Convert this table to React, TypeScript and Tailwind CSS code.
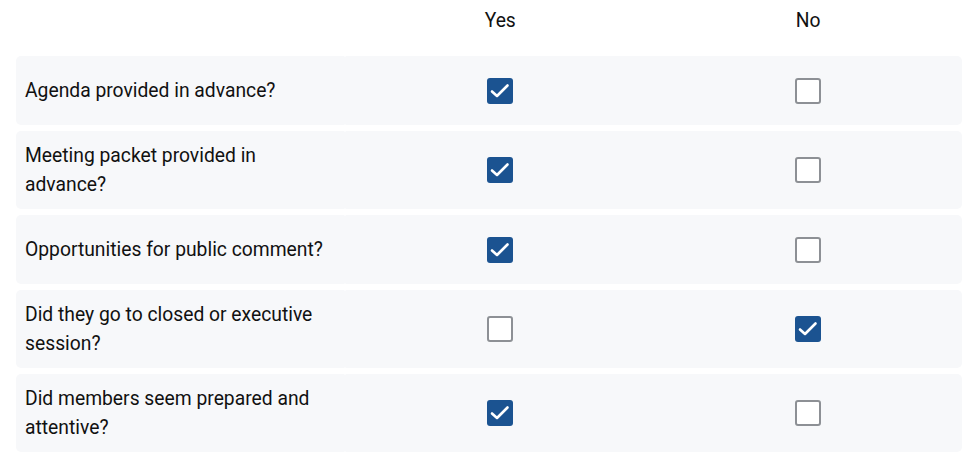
import React from "react";

type Row = { label: string; yes: boolean };

const rows: Row[] = [
  { label: "Agenda provided in advance?", yes: true },
  { label: "Meeting packet provided in advance?", yes: true },
  { label: "Opportunities for public comment?", yes: true },
  { label: "Did they go to closed or executive session?", yes: false },
  { label: "Did members seem prepared and attentive?", yes: true },
];

function Box({ checked }: { checked: boolean }) {
  if (checked) {
    return (
      <div className="w-[26px] h-[26px] rounded-[3px] bg-[#1b5391] flex items-center justify-center">
        <svg width="26" height="26" viewBox="0 0 26 26">
          <polyline
            points="5,13.5 10,18 20.5,7.5"
            fill="none"
            stroke="#ffffff"
            strokeWidth="2.6"
            strokeLinecap="round"
            strokeLinejoin="round"
          />
        </svg>
      </div>
    );
  }
  return <div className="w-[26px] h-[26px] rounded-[3px] border-2 border-[#8d9095] bg-white" />;
}

export default function App() {
  return (
    <div
      className="w-[980px] h-[460px] bg-white text-[#111111]"
      style={{ fontFamily: "Roboto, 'Liberation Sans', sans-serif" }}
    >
      <div className="ml-4 w-[946px]">
        <div className="grid grid-cols-[329px_1fr_1fr] h-[42px] items-center text-[19.3px]">
          <div />
          <div className="text-center pl-[2px]">Yes</div>
          <div className="text-center pl-[1px]">No</div>
        </div>
        <div className="mt-[14px] flex flex-col gap-[6px]">
          {rows.map((r, i) => (
            <div key={i} className="grid grid-cols-[329px_1fr_1fr] min-h-[69px]">
              <div className="bg-[#f7f8fa] rounded-l-[5px] rounded-r-[1.5px] flex items-center pl-[9px] py-[10px] text-[19.3px] leading-[29px]">
                <span className="max-w-[305px]">{r.label}</span>
              </div>
              <div className="col-span-2 grid grid-cols-2 bg-[#f7f8fa] rounded-r-[5px] rounded-l-[1.5px]">
                <div className="flex items-center justify-center pl-[1px]">
                  <Box checked={r.yes} />
                </div>
                <div className="flex items-center justify-center pl-[1px]">
                  <Box checked={!r.yes} />
                </div>
              </div>
            </div>
          ))}
        </div>
      </div>
    </div>
  );
}
